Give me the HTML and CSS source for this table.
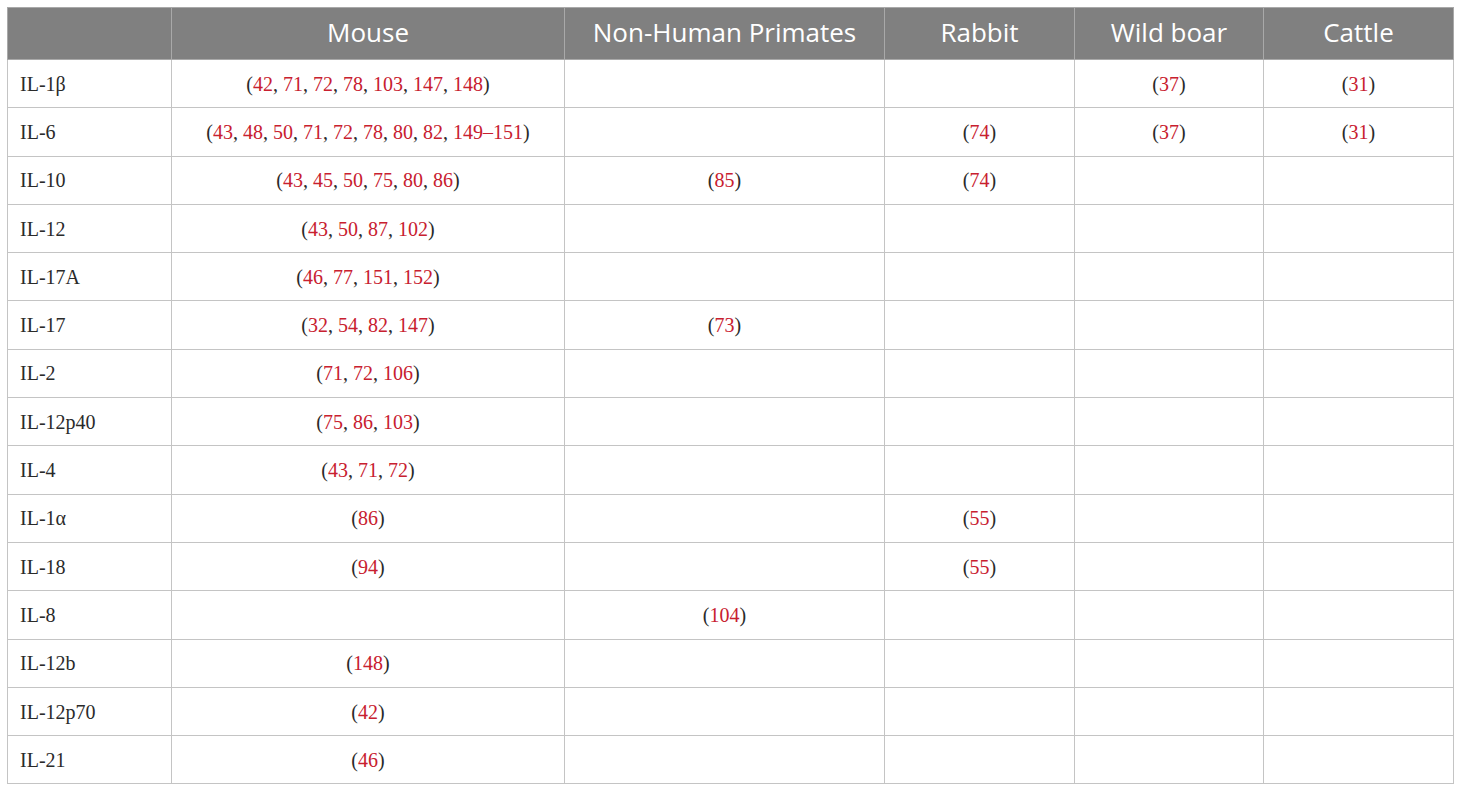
FILE: index.html
```html
<!DOCTYPE html>
<html>
<head>
<meta charset="utf-8">
<link rel="stylesheet" href="styles.css">
</head>
<body>
<table class="tbl">
<colgroup>
<col class="c0"><col class="c1"><col class="c2"><col class="c3"><col class="c4"><col class="c5">
</colgroup>
<thead>
<tr><th></th><th>Mouse</th><th>Non-Human Primates</th><th>Rabbit</th><th>Wild boar</th><th>Cattle</th></tr>
</thead>
<tbody>
<tr><td class="name">IL-1β</td><td>(<span class="r">42</span>, <span class="r">71</span>, <span class="r">72</span>, <span class="r">78</span>, <span class="r">103</span>, <span class="r">147</span>, <span class="r">148</span>)</td><td></td><td></td><td>(<span class="r">37</span>)</td><td>(<span class="r">31</span>)</td></tr>
<tr><td class="name">IL-6</td><td>(<span class="r">43</span>, <span class="r">48</span>, <span class="r">50</span>, <span class="r">71</span>, <span class="r">72</span>, <span class="r">78</span>, <span class="r">80</span>, <span class="r">82</span>, <span class="r">149–151</span>)</td><td></td><td>(<span class="r">74</span>)</td><td>(<span class="r">37</span>)</td><td>(<span class="r">31</span>)</td></tr>
<tr><td class="name">IL-10</td><td>(<span class="r">43</span>, <span class="r">45</span>, <span class="r">50</span>, <span class="r">75</span>, <span class="r">80</span>, <span class="r">86</span>)</td><td>(<span class="r">85</span>)</td><td>(<span class="r">74</span>)</td><td></td><td></td></tr>
<tr><td class="name">IL-12</td><td>(<span class="r">43</span>, <span class="r">50</span>, <span class="r">87</span>, <span class="r">102</span>)</td><td></td><td></td><td></td><td></td></tr>
<tr><td class="name">IL-17A</td><td>(<span class="r">46</span>, <span class="r">77</span>, <span class="r">151</span>, <span class="r">152</span>)</td><td></td><td></td><td></td><td></td></tr>
<tr><td class="name">IL-17</td><td>(<span class="r">32</span>, <span class="r">54</span>, <span class="r">82</span>, <span class="r">147</span>)</td><td>(<span class="r">73</span>)</td><td></td><td></td><td></td></tr>
<tr><td class="name">IL-2</td><td>(<span class="r">71</span>, <span class="r">72</span>, <span class="r">106</span>)</td><td></td><td></td><td></td><td></td></tr>
<tr><td class="name">IL-12p40</td><td>(<span class="r">75</span>, <span class="r">86</span>, <span class="r">103</span>)</td><td></td><td></td><td></td><td></td></tr>
<tr><td class="name">IL-4</td><td>(<span class="r">43</span>, <span class="r">71</span>, <span class="r">72</span>)</td><td></td><td></td><td></td><td></td></tr>
<tr><td class="name">IL-1α</td><td>(<span class="r">86</span>)</td><td></td><td>(<span class="r">55</span>)</td><td></td><td></td></tr>
<tr><td class="name">IL-18</td><td>(<span class="r">94</span>)</td><td></td><td>(<span class="r">55</span>)</td><td></td><td></td></tr>
<tr><td class="name">IL-8</td><td></td><td>(<span class="r">104</span>)</td><td></td><td></td><td></td></tr>
<tr><td class="name">IL-12b</td><td>(<span class="r">148</span>)</td><td></td><td></td><td></td><td></td></tr>
<tr><td class="name">IL-12p70</td><td>(<span class="r">42</span>)</td><td></td><td></td><td></td><td></td></tr>
<tr><td class="name">IL-21</td><td>(<span class="r">46</span>)</td><td></td><td></td><td></td><td></td></tr>
</tbody>
</table>
</body>
</html>
```

FILE: styles.css
```css
html, body {
  margin: 0;
  padding: 0;
  background: #ffffff;
}
body {
  padding: 7px 0 0 7px;
}
.tbl {
  border-collapse: collapse;
  table-layout: fixed;
  width: 1446px;
  font-family: "Liberation Serif", "Times New Roman", serif;
  font-size: 20px;
  color: #2a2a2a;
}
.c0 { width: 164px; }
.c1 { width: 393px; }
.c2 { width: 320px; }
.c3 { width: 190px; }
.c4 { width: 189px; }
.c5 { width: 190px; }
.tbl th {
  background: #808080;
  color: #ffffff;
  font-family: "Open Sans", "Noto Sans", sans-serif;
  font-weight: 400;
  font-size: 26px;
  line-height: 30px;
  height: 47px;
  padding: 0 0 4px;
  text-align: center;
  vertical-align: middle;
  border: 1px solid #a9a9a9;
}
.tbl td {
  height: 47.3px;
  padding: 0 12px;
  line-height: 24px;
  text-align: center;
  vertical-align: middle;
  border: 1px solid #c4c4c4;
}
.tbl td.name {
  text-align: left;
}
.r {
  color: #c8202f;
}
```
